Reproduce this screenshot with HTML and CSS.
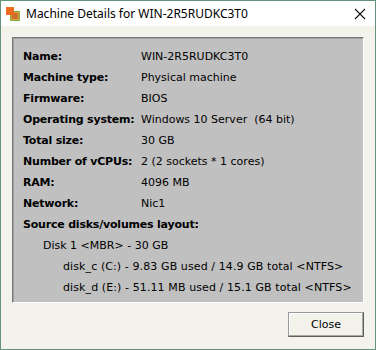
FILE: index.html
```html
<!DOCTYPE html>
<html>
<head>
  <title>Machine Details</title>
  <link rel="stylesheet" href="styles.css">
</head>
<body>
  <div class="window">
    <div class="titlebar">
      <svg class="app-icon" width="16" height="16" viewBox="0 0 16 16">
        <rect x="5.5" y="5.5" width="9" height="9" fill="#e39a3c" stroke="#7cb342"/>
        <rect x="7" y="7" width="6" height="6" fill="#c8702a"/>
        <rect x="1" y="1" width="8" height="8" fill="#ee6a1f"/>
      </svg>
      <span class="title">Machine Details for WIN-2R5RUDKC3T0</span>
      <svg class="close-x" width="12" height="12" viewBox="0 0 12 12">
        <path d="M1 1 L11 11 M11 1 L1 11" stroke="#111" stroke-width="1.1"/>
      </svg>
    </div>

    <div class="content">
      <div class="panel">
        <div class="row"><span class="label">Name:</span><span>WIN-2R5RUDKC3T0</span></div>
        <div class="row"><span class="label">Machine type:</span><span>Physical machine</span></div>
        <div class="row"><span class="label">Firmware:</span><span>BIOS</span></div>
        <div class="row"><span class="label">Operating system:</span><span>Windows 10 Server&nbsp; (64 bit)</span></div>
        <div class="row"><span class="label">Total size:</span><span>30 GB</span></div>
        <div class="row"><span class="label">Number of vCPUs:</span><span>2 (2 sockets * 1 cores)</span></div>
        <div class="row"><span class="label">RAM:</span><span>4096 MB</span></div>
        <div class="row"><span class="label">Network:</span><span>Nic1</span></div>
        <div class="row"><span class="label wide">Source disks/volumes layout:</span></div>
        <div class="row disk">Disk 1 &lt;MBR&gt; - 30 GB</div>
        <div class="row volume">disk_c (C:) - 9.83 GB used / 14.9 GB total &lt;NTFS&gt;</div>
        <div class="row volume">disk_d (E:) - 51.11 MB used / 15.1 GB total &lt;NTFS&gt;</div>
      </div>

      <div class="actions">
        <button class="btn">Close</button>
      </div>
    </div>
  </div>
</body>
</html>
```

FILE: styles.css
```css
body {
  margin: 0;
  background: #ffffff;
}

.window {
  width: 376px;
  height: 350px;
  box-sizing: border-box;
  border: 1px solid #64927a;
  background-color: #f3f3eb;
  display: flex;
  flex-direction: column;
}

.titlebar {
  height: 25px;
  background-color: #ffffff;
  display: flex;
  align-items: center;
  padding: 0 9px 0 4px;
}

.titlebar .app-icon {
  margin-right: 5px;
  margin-top: 1px;
}

.titlebar .title {
  flex: 1;
  font-family: "Noto Sans", "Open Sans", sans-serif;
  font-size: 12px;
  color: #000;
}

.content {
  padding: 11px 11px 0 11px;
  display: flex;
  flex-direction: column;
}

.panel {
  background-color: #c0c0c0;
  border: 1px solid;
  border-color: #787878 #ffffff #ffffff #787878;
  box-shadow: inset 1px 1px 0 #a0a0a0;
  padding: 8px 9px 4px 10px;
  font-family: "DejaVu Sans", sans-serif;
  font-size: 11px;
  color: #000;
}

.row {
  height: 21px;
  line-height: 21px;
  display: flex;
  white-space: nowrap;
}

.row .label {
  width: 118px;
  font-weight: bold;
  letter-spacing: -0.2px;
}

.row .label.wide {
  width: auto;
}

.row.disk {
  padding-left: 20px;
}

.row.volume {
  padding-left: 40px;
  letter-spacing: 0.1px;
}

.actions {
  display: flex;
  justify-content: flex-end;
  padding-top: 9px;
}

.btn {
  width: 76px;
  height: 25px;
  background-color: #f3f3eb;
  border: 1px solid;
  border-color: #9a9a9a #5e5e5e #5e5e5e #9a9a9a;
  box-shadow: inset -1px -1px 0 #a8a8a8, inset 1px 1px 0 #ffffff;
  font-family: "DejaVu Sans", sans-serif;
  font-size: 11px;
  color: #000;
  padding: 0;
}
```
